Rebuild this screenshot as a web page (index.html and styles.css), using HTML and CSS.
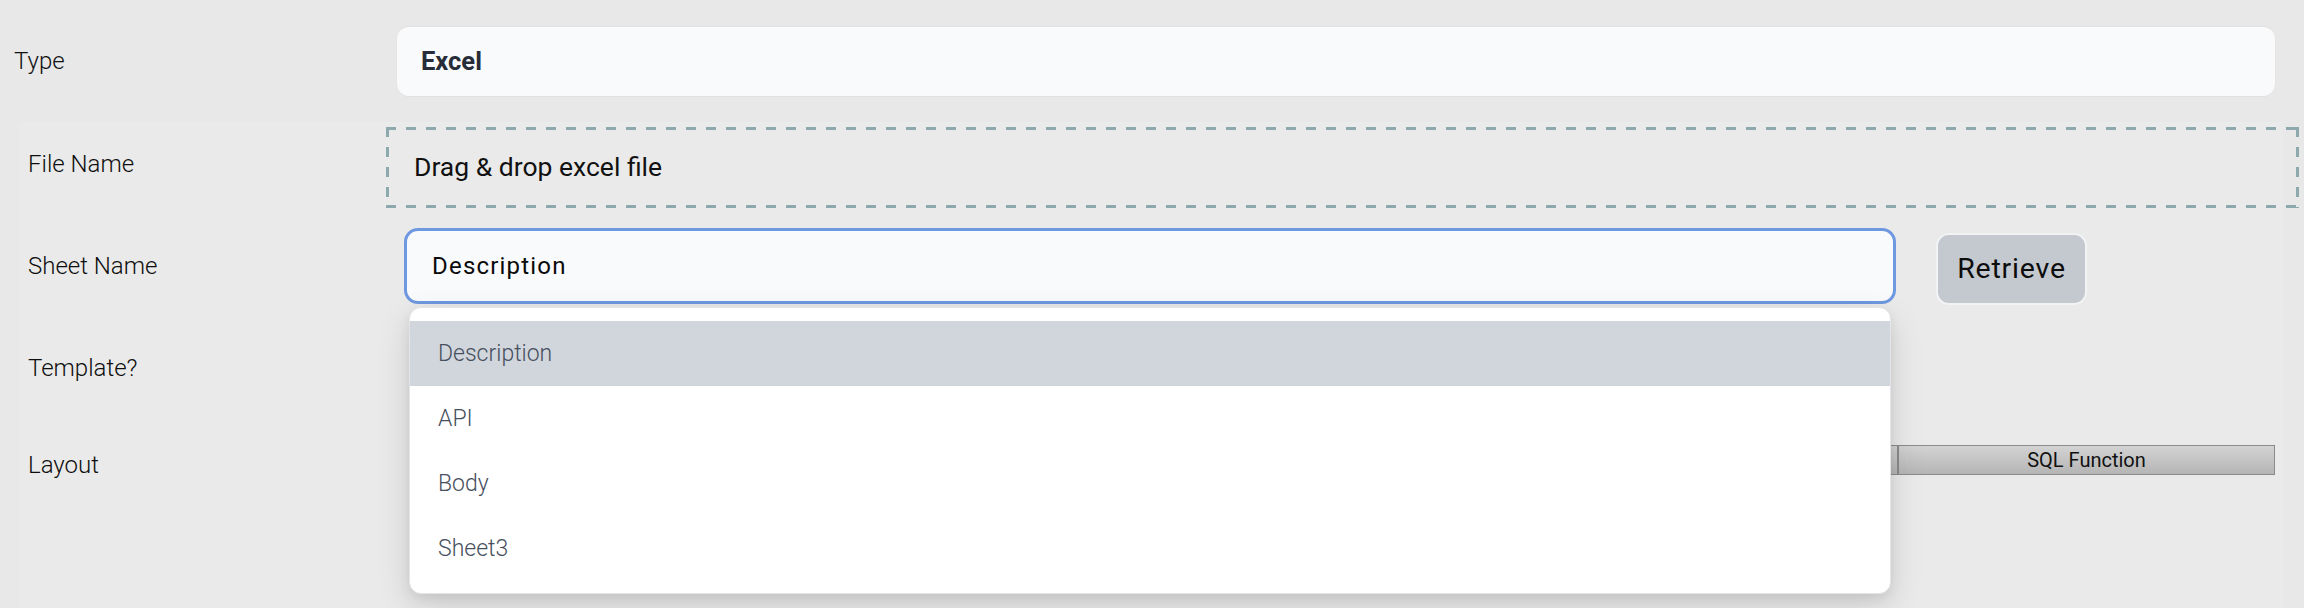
FILE: index.html
```html
<!DOCTYPE html>
<html lang="en">
<head>
<meta charset="utf-8">
<title>Excel import</title>
<link rel="stylesheet" href="styles.css">
</head>
<body>
<div class="page">
  <div class="type-row">
    <div class="type-label">Type</div>
    <div class="type-box">Excel</div>
  </div>
  <div class="panel">
    <div class="file-row">
      <div class="label label-file">File Name</div>
      <div class="dropzone">Drag &amp; drop excel file</div>
    </div>
    <div class="sheet-row">
      <div class="label label-tall">Sheet Name</div>
      <div class="sheet-wrap">
        <div class="sheet-input">Description</div>
        <div class="dropdown">
          <div class="option active">Description</div>
          <div class="option">API</div>
          <div class="option">Body</div>
          <div class="option">Sheet3</div>
        </div>
      </div>
      <div class="retrieve">Retrieve</div>
    </div>
    <div class="template-row">
      <div class="label">Template?</div>
    </div>
    <div class="layout-row">
      <div class="label label-layout">Layout</div>
      <div class="segmented">
        <div class="segment">Table</div>
        <div class="segment">Form</div>
        <div class="segment">Chart</div>
        <div class="segment">SQL Function</div>
      </div>
    </div>
  </div>
</div>
</body>
</html>
```

FILE: styles.css
```css
* {
  box-sizing: border-box;
}

html, body {
  margin: 0;
  padding: 0;
}

body {
  width: 2304px;
  height: 608px;
  overflow: hidden;
  background: #e8e8e8;
  font-family: Roboto, "Liberation Sans", Arial, sans-serif;
  color: #111111;
}

.page {
  padding-top: 27px;
}

.type-row {
  display: flex;
  align-items: center;
  height: 69px;
}

.type-label {
  flex: 0 0 397px;
  padding-left: 14px;
  font-size: 24px;
  font-weight: 300;
  line-height: 30px;
  margin-top: -2px;
}

.type-box {
  flex: 1;
  margin-right: 29px;
  height: 69px;
  display: flex;
  align-items: center;
  padding-left: 24px;
  padding-bottom: 2px;
  background: #f9fafb;
  border-radius: 12px;
  box-shadow: 0 -1px 2px rgba(0, 0, 0, 0.03), 0 1px 1px rgba(0, 0, 0, 0.03);
  font-size: 25.5px;
  font-weight: 700;
  color: #262c38;
}

.panel {
  margin: 26px 21px 0 19px;
  padding: 5px 0 0 9px;
  height: 486px;
  background: #eaeaea;
}

.label {
  flex: 0 0 358px;
  font-size: 24px;
  font-weight: 300;
  line-height: 30px;
  color: #0e0e0e;
}

.file-row {
  display: flex;
  align-items: flex-start;
  height: 81px;
}

.label-file {
  margin-top: 22px;
}

.dropzone {
  flex: 1;
  margin-right: -16px;
  height: 81px;
  display: flex;
  align-items: center;
  padding-left: 28px;
  padding-bottom: 2px;
  font-size: 26.5px;
  color: #111111;
  background:
    repeating-linear-gradient(90deg, #8ea9ad 0 10px, transparent 10px 20px) left top / 100% 3px no-repeat,
    repeating-linear-gradient(90deg, #8ea9ad 0 10px, transparent 10px 20px) left bottom / 100% 3px no-repeat,
    repeating-linear-gradient(180deg, #8ea9ad 0 10px, transparent 10px 20px) left top / 3px 100% no-repeat,
    repeating-linear-gradient(180deg, #8ea9ad 0 10px, transparent 10px 20px) right top / 3px 100% no-repeat;
}

.sheet-row {
  display: flex;
  align-items: flex-start;
  margin-top: 20px;
  height: 77px;
}

.label-tall {
  height: 76px;
  display: flex;
  align-items: center;
}

.sheet-wrap {
  position: relative;
  margin-left: 18px;
  flex: 0 0 1492px;
}

.sheet-input {
  height: 76px;
  display: flex;
  align-items: center;
  padding-left: 25px;
  border: 3px solid #6e98df;
  border-radius: 14px;
  background: #f8fafc;
  font-size: 24px;
  letter-spacing: 1.2px;
  color: #0a0a0a;
}

.dropdown {
  position: absolute;
  z-index: 5;
  top: calc(100% + 3px);
  left: 5px;
  width: 1482px;
  padding: 13px 0 12px;
  background: #ffffff;
  border: 1px solid #e3e5e9;
  border-radius: 12px;
  box-shadow: 0 12px 34px rgba(0, 0, 0, 0.13), 0 4px 12px rgba(0, 0, 0, 0.07);
}

.option {
  height: 65px;
  display: flex;
  align-items: center;
  padding-left: 28px;
  font-size: 23px;
  font-weight: 300;
  color: #464f5d;
}

.option.active {
  background: #d1d5dc;
}

.retrieve {
  margin-left: 40px;
  margin-top: 5px;
  width: 151px;
  height: 72px;
  display: flex;
  align-items: center;
  justify-content: center;
  padding-bottom: 2px;
  background: #c4c8cf;
  border: 2px solid #f2f3f5;
  border-radius: 13px;
  font-size: 28.5px;
  letter-spacing: 0.8px;
  color: #0d0d0d;
}

.template-row {
  display: flex;
  margin-top: 48px;
  height: 30px;
}

.layout-row {
  display: flex;
  align-items: flex-start;
  margin-top: 62px;
}

.label-layout {
  margin-top: 5px;
}

.segmented {
  display: flex;
  margin-left: 381px;
  width: 1508px;
}

.segment {
  flex: 1;
  height: 30px;
  line-height: 28px;
  text-align: center;
  font-size: 20px;
  color: #111111;
  border: 1px solid #8b8b8b;
  background: linear-gradient(#d3d3d3, #b5b5b5);
}
```
